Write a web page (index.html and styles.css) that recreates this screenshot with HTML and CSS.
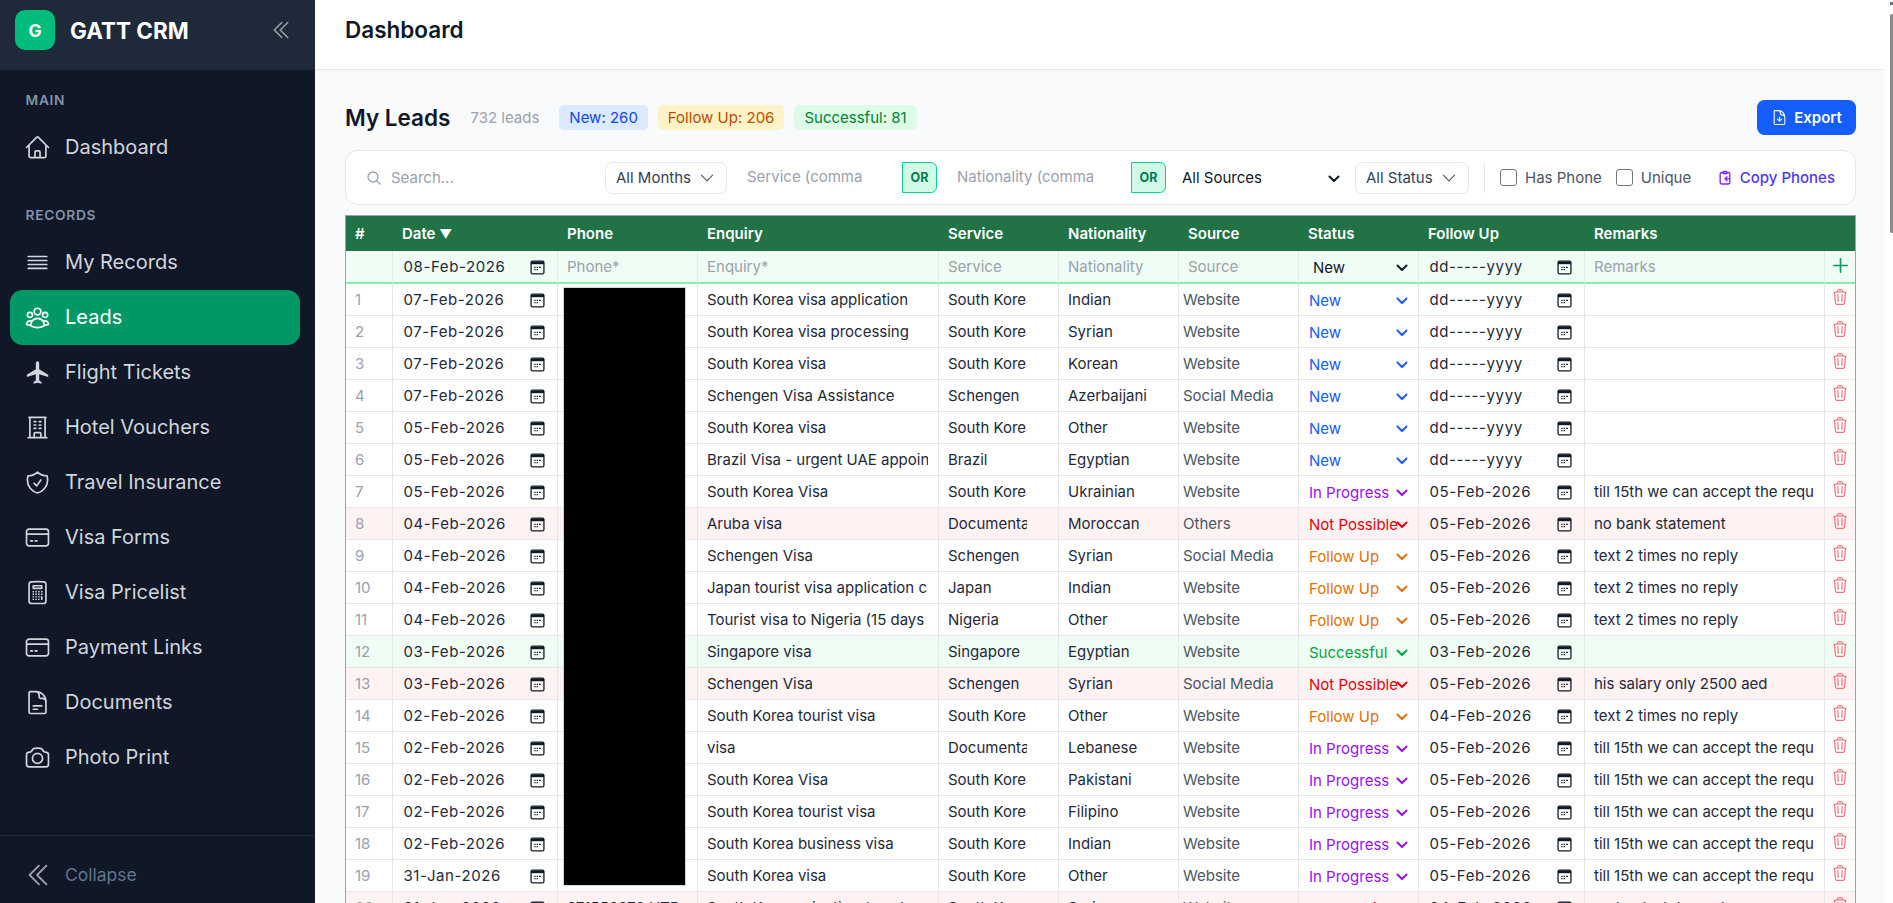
FILE: index.html
```html
<!DOCTYPE html>
<html lang="en">
<head>
<meta charset="utf-8">
<title>GATT CRM</title>
<link rel="stylesheet" href="styles.css">
</head>
<body>
<svg class="defs" aria-hidden="true">
  <symbol id="cal" viewBox="0 0 14 14"><rect x="1" y="1" width="12" height="12" rx="1.4" fill="none" stroke="currentColor" stroke-width="1.2"/><rect x="1" y="1.5" width="12" height="2.4" fill="currentColor"/><path d="M4 6.2h1.200v1.200H4zM6.200 6.200h1.200v1.200H6.200zM8.400 6.200h1.600v1.200H8.400zM4 8.400h1.200v1.200H4zM6.200 8.400h1.200v1.200H6.200z" fill="currentColor"/></symbol>
  <symbol id="trash" viewBox="0 0 24 24"><path fill="none" stroke="currentColor" stroke-width="1.5" stroke-linecap="round" stroke-linejoin="round" d="m14.74 9-.346 9m-4.788 0L9.26 9m9.968-3.21c.342.052.682.107 1.022.166m-1.022-.165L18.16 19.673a2.25 2.25 0 0 1-2.244 2.077H8.084a2.25 2.25 0 0 1-2.244-2.077L4.772 5.79m14.456 0a48.108 48.108 0 0 0-3.478-.397m-12 .562c.34-.059.68-.114 1.022-.165m0 0a48.11 48.11 0 0 1 3.478-.397m7.5 0v-.916c0-1.18-.91-2.164-2.09-2.201a51.964 51.964 0 0 0-3.32 0c-1.18.037-2.09 1.022-2.09 2.201v.916m7.5 0a48.667 48.667 0 0 0-7.5 0"/></symbol>
  <symbol id="down" viewBox="0 0 24 24"><path fill="none" stroke="currentColor" stroke-width="1.5" stroke-linecap="round" stroke-linejoin="round" d="m19.5 8.25-7.5 7.5-7.5-7.5"/></symbol>
  <symbol id="chev" viewBox="0 0 12 8"><path fill="none" stroke="currentColor" stroke-width="2" stroke-linecap="round" stroke-linejoin="round" d="M1.500 1.500 6 6l4.500-4.500"/></symbol>
  <symbol id="dbl" viewBox="0 0 24 24"><path fill="none" stroke="currentColor" stroke-width="1.5" stroke-linecap="round" stroke-linejoin="round" d="m18.75 4.5-7.5 7.5 7.5 7.5m-6-15L5.25 12l7.5 7.5"/></symbol>
  <symbol id="card" viewBox="0 0 24 24"><path fill="none" stroke="currentColor" stroke-width="1.5" stroke-linecap="round" stroke-linejoin="round" d="M2.25 9h19.5M4.5 19.5h15a2.25 2.25 0 0 0 2.25-2.25V6.75A2.25 2.25 0 0 0 19.5 4.5h-15a2.25 2.25 0 0 0-2.25 2.25v10.5A2.25 2.25 0 0 0 4.5 19.5ZM6 15h1.500M10 15h1.500"/></symbol>
</svg>
<div class="app">
  <aside class="sidebar">
    <div class="brand">
      <span class="logo">G</span>
      <span class="brand-name">GATT CRM</span>
      <svg class="brand-toggle"><use href="#dbl"/></svg>
    </div>
    <nav class="nav">
      <div class="nav-label">MAIN</div>
      <a class="nav-item"><svg class="nav-icon" viewBox="0 0 24 24"><path d="m2.25 12 8.954-8.955c.44-.439 1.152-.439 1.591 0L21.75 12M4.5 9.75v10.125c0 .621.504 1.125 1.125 1.125H9.75v-4.875c0-.621.504-1.125 1.125-1.125h2.25c.621 0 1.125.504 1.125 1.125V21h4.125c.621 0 1.125-.504 1.125-1.125V9.75M8.25 21h8.25"/></svg>Dashboard</a>
      <div class="nav-label nav-label-next">RECORDS</div>
      <a class="nav-item"><svg class="nav-icon" viewBox="0 0 24 24"><path d="M3.750 6.670h16.500M3.750 10.200h16.500M3.750 13.800h16.500M3.750 17.300h16.500"/></svg>My Records</a>
      <a class="nav-item active"><svg class="nav-icon" viewBox="0 0 24 24"><path d="M18 18.72a9.094 9.094 0 0 0 3.741-.479 3 3 0 0 0-4.682-2.72m.94 3.198.001.031c0 .225-.012.447-.037.666A11.944 11.944 0 0 1 12 21c-2.17 0-4.207-.576-5.963-1.584A6.062 6.062 0 0 1 6 18.719m12 0a5.971 5.971 0 0 0-.941-3.197m0 0A5.995 5.995 0 0 0 12 12.75a5.995 5.995 0 0 0-5.058 2.772m0 0a3 3 0 0 0-4.681 2.72 8.986 8.986 0 0 0 3.74.477m.94-3.197a5.971 5.971 0 0 0-.94 3.197M15 6.75a3 3 0 1 1-6 0 3 3 0 0 1 6 0Zm6 3a2.25 2.25 0 1 1-4.5 0 2.25 2.25 0 0 1 4.5 0Zm-13.5 0a2.25 2.25 0 1 1-4.5 0 2.25 2.25 0 0 1 4.5 0Z"/></svg>Leads</a>
      <a class="nav-item"><svg class="nav-icon nav-solid" viewBox="0 0 24 24"><path d="M21.500 16v-2l-8-5V3.500a1.500 1.500 0 0 0-3 0V9l-8 5v2l8-2.500V19l-2 1.500V22l3.500-1 3.500 1v-1.500L13.500 19v-5.500l8 2.500z"/></svg>Flight Tickets</a>
      <a class="nav-item"><svg class="nav-icon" viewBox="0 0 24 24"><path d="M3.750 21h16.500M4.500 3h15M5.250 3v18m13.500-18v18M9 6.750h1.500m-1.500 3h1.500m-1.500 3h1.500m3-6H15m-1.500 3H15m-1.500 3H15M9 21v-3.375c0-.621.504-1.125 1.125-1.125h3.750c.621 0 1.125.504 1.125 1.125V21"/></svg>Hotel Vouchers</a>
      <a class="nav-item"><svg class="nav-icon" viewBox="0 0 24 24"><path d="M9 12.750 11.250 15 15 9.750m-3-7.036A11.959 11.959 0 0 1 3.598 6 11.990 11.990 0 0 0 3 9.749c0 5.592 3.824 10.290 9 11.623 5.176-1.332 9-6.030 9-11.622 0-1.310-.210-2.571-.598-3.751h-.152c-3.196 0-6.100-1.248-8.250-3.285Z"/></svg>Travel Insurance</a>
      <a class="nav-item"><svg class="nav-icon"><use href="#card"/></svg>Visa Forms</a>
      <a class="nav-item"><svg class="nav-icon" viewBox="0 0 24 24"><path d="M15.750 15.750V18m-7.500-6.750h.008v.008H8.250v-.008Zm0 2.250h.008v.008H8.250V13.500Zm0 2.250h.008v.008H8.250v-.008Zm0 2.250h.008v.008H8.250V18Zm2.498-6.750h.007v.008h-.007v-.008Zm0 2.250h.007v.008h-.007V13.500Zm0 2.250h.007v.008h-.007v-.008Zm0 2.250h.007v.008h-.007V18Zm2.504-6.750h.008v.008h-.008v-.008Zm0 2.250h.008v.008h-.008V13.500Zm0 2.250h.008v.008h-.008v-.008Zm0 2.250h.008v.008h-.008V18Zm2.498-6.750h.008v.008h-.008v-.008Zm0 2.250h.008v.008h-.008V13.500ZM8.250 6h7.500v2.250h-7.500V6ZM12 2.250c-1.892 0-3.758.110-5.593.322C5.307 2.700 4.500 3.650 4.500 4.757V19.500a2.250 2.250 0 0 0 2.250 2.250h10.500a2.250 2.250 0 0 0 2.250-2.250V4.757c0-1.108-.806-2.057-1.907-2.185A48.507 48.507 0 0 0 12 2.250Z"/></svg>Visa Pricelist</a>
      <a class="nav-item"><svg class="nav-icon"><use href="#card"/></svg>Payment Links</a>
      <a class="nav-item"><svg class="nav-icon" viewBox="0 0 24 24"><path d="M19.500 14.250v-2.625a3.375 3.375 0 0 0-3.375-3.375h-1.500A1.125 1.125 0 0 1 13.500 7.125v-1.500a3.375 3.375 0 0 0-3.375-3.375H8.250m0 12.750h7.500m-7.500 3H12M10.500 2.250H5.625c-.621 0-1.125.504-1.125 1.125v17.250c0 .621.504 1.125 1.125 1.125h12.750c.621 0 1.125-.504 1.125-1.125V11.250a9 9 0 0 0-9-9Z"/></svg>Documents</a>
      <a class="nav-item"><svg class="nav-icon" viewBox="0 0 24 24"><path d="M6.827 6.175A2.310 2.310 0 0 1 5.186 7.230c-.380.054-.757.112-1.134.175C2.999 7.580 2.250 8.507 2.250 9.574V18a2.250 2.250 0 0 0 2.250 2.250h15A2.250 2.250 0 0 0 21.750 18V9.574c0-1.067-.750-1.994-1.802-2.169a47.865 47.865 0 0 0-1.134-.175 2.310 2.310 0 0 1-1.640-1.055l-.822-1.316a2.192 2.192 0 0 0-1.736-1.039 48.774 48.774 0 0 0-5.232 0 2.192 2.192 0 0 0-1.736 1.039l-.821 1.316Z"/><path d="M16.500 12.750a4.500 4.500 0 1 1-9 0 4.500 4.500 0 0 1 9 0Z"/></svg>Photo Print</a>
    </nav>
    <div class="collapse"><svg class="collapse-icon"><use href="#dbl"/></svg>Collapse</div>
  </aside>
  <main class="main">
    <header class="topbar"><h1>Dashboard</h1></header>
    <div class="content">
      <div class="title-row">
        <h2>My Leads</h2>
        <span class="count">732 leads</span>
        <span class="pill pill-new">New: 260</span>
        <span class="pill pill-follow">Follow Up: 206</span>
        <span class="pill pill-ok">Successful: 81</span>
        <button class="export"><svg class="export-icon" viewBox="0 0 24 24"><path d="M19.500 14.250v-2.625a3.375 3.375 0 0 0-3.375-3.375h-1.500A1.125 1.125 0 0 1 13.500 7.125v-1.500a3.375 3.375 0 0 0-3.375-3.375H8.250m.750 12 3 3m0 0 3-3m-3 3v-6m-1.500-9H5.625c-.621 0-1.125.504-1.125 1.125v17.250c0 .621.504 1.125 1.125 1.125h12.750c.621 0 1.125-.504 1.125-1.125V11.250a9 9 0 0 0-9-9Z"/></svg>Export</button>
      </div>
      <div class="filters">
        <div class="search"><svg class="search-icon" viewBox="0 0 24 24"><path d="m21 21-5.197-5.197m0 0A7.500 7.500 0 1 0 5.196 5.196a7.500 7.500 0 0 0 10.607 10.607Z"/></svg>Search...</div>
        <div class="drop drop-months">All Months<svg class="drop-icon"><use href="#down"/></svg></div>
        <div class="multi multi-service"><span class="multi-text">Service (comma separated)</span><span class="or">OR</span></div>
        <div class="multi multi-nat"><span class="multi-text">Nationality (comma separated)</span><span class="or">OR</span></div>
        <div class="source"><select class="source-select"><option>All Sources</option></select><svg class="source-chev"><use href="#chev"/></svg></div>
        <div class="drop drop-status">All Status<svg class="drop-icon"><use href="#down"/></svg></div>
        <span class="divider"></span>
        <label class="check check-phone"><input type="checkbox">Has Phone</label>
        <label class="check check-unique"><input type="checkbox">Unique</label>
        <span class="copy"><svg class="copy-icon" viewBox="0 0 24 24"><path d="M9 4.500H7a2.250 2.250 0 0 0-2.250 2.250v12.750A2.250 2.250 0 0 0 7 21.750h10a2.250 2.250 0 0 0 2.250-2.250V6.750A2.250 2.250 0 0 0 17 4.500h-2M9 4.500a1.500 1.500 0 0 1 1.500-1.500h3a1.500 1.500 0 0 1 1.500 1.500V6H9V4.500ZM19 14h-7m0 0 3-3m-3 3 3 3"/></svg>Copy Phones</span>
      </div>
      <div class="table-wrap">
        <table class="leads">
          <colgroup><col class="c-num"><col class="c-date"><col class="c-phone"><col class="c-enq"><col class="c-svc"><col class="c-nat"><col class="c-src"><col class="c-status"><col class="c-follow"><col class="c-rem"><col class="c-act"></colgroup>
          <thead><tr><th>#</th><th>Date <span class="sort">▼</span></th><th>Phone</th><th>Enquiry</th><th>Service</th><th>Nationality</th><th>Source</th><th>Status</th><th>Follow Up</th><th>Remarks</th><th></th></tr></thead>
          <tbody>
            <tr class="add-row"><td></td><td class="date">08-Feb-2026<svg class="cal"><use href="#cal"/></svg></td><td class="ph">Phone*</td><td class="ph">Enquiry*</td><td class="ph">Service</td><td class="ph">Nationality</td><td class="ph">Source</td><td class="st s-add"><select class="status"><option>New</option></select><svg class="chev"><use href="#chev"/></svg></td><td class="date">dd-----yyyy<svg class="cal"><use href="#cal"/></svg></td><td class="ph">Remarks</td><td class="act"><svg class="plus" viewBox="0 0 24 24"><path d="M12 3.500v17M3.500 12h17"/></svg></td></tr>
            <tr><td class="num">1</td><td class="date">07-Feb-2026<svg class="cal"><use href="#cal"/></svg></td><td></td><td><span class="clip enq">South Korea visa application</span></td><td><span class="clip svc">South Korea</span></td><td>Indian</td><td class="src">Website</td><td class="st s-new"><select class="status"><option>New</option></select><svg class="chev"><use href="#chev"/></svg></td><td class="date">dd-----yyyy<svg class="cal"><use href="#cal"/></svg></td><td><span class="clip rem"></span></td><td class="act"><svg class="del"><use href="#trash"/></svg></td></tr>
            <tr><td class="num">2</td><td class="date">07-Feb-2026<svg class="cal"><use href="#cal"/></svg></td><td></td><td><span class="clip enq">South Korea visa processing</span></td><td><span class="clip svc">South Korea</span></td><td>Syrian</td><td class="src">Website</td><td class="st s-new"><select class="status"><option>New</option></select><svg class="chev"><use href="#chev"/></svg></td><td class="date">dd-----yyyy<svg class="cal"><use href="#cal"/></svg></td><td><span class="clip rem"></span></td><td class="act"><svg class="del"><use href="#trash"/></svg></td></tr>
            <tr><td class="num">3</td><td class="date">07-Feb-2026<svg class="cal"><use href="#cal"/></svg></td><td></td><td><span class="clip enq">South Korea visa</span></td><td><span class="clip svc">South Korea</span></td><td>Korean</td><td class="src">Website</td><td class="st s-new"><select class="status"><option>New</option></select><svg class="chev"><use href="#chev"/></svg></td><td class="date">dd-----yyyy<svg class="cal"><use href="#cal"/></svg></td><td><span class="clip rem"></span></td><td class="act"><svg class="del"><use href="#trash"/></svg></td></tr>
            <tr><td class="num">4</td><td class="date">07-Feb-2026<svg class="cal"><use href="#cal"/></svg></td><td></td><td><span class="clip enq">Schengen Visa Assistance</span></td><td><span class="clip svc">Schengen</span></td><td>Azerbaijani</td><td class="src">Social Media</td><td class="st s-new"><select class="status"><option>New</option></select><svg class="chev"><use href="#chev"/></svg></td><td class="date">dd-----yyyy<svg class="cal"><use href="#cal"/></svg></td><td><span class="clip rem"></span></td><td class="act"><svg class="del"><use href="#trash"/></svg></td></tr>
            <tr><td class="num">5</td><td class="date">05-Feb-2026<svg class="cal"><use href="#cal"/></svg></td><td></td><td><span class="clip enq">South Korea visa</span></td><td><span class="clip svc">South Korea</span></td><td>Other</td><td class="src">Website</td><td class="st s-new"><select class="status"><option>New</option></select><svg class="chev"><use href="#chev"/></svg></td><td class="date">dd-----yyyy<svg class="cal"><use href="#cal"/></svg></td><td><span class="clip rem"></span></td><td class="act"><svg class="del"><use href="#trash"/></svg></td></tr>
            <tr><td class="num">6</td><td class="date">05-Feb-2026<svg class="cal"><use href="#cal"/></svg></td><td></td><td><span class="clip enq">Brazil Visa - urgent UAE appointment</span></td><td><span class="clip svc">Brazil</span></td><td>Egyptian</td><td class="src">Website</td><td class="st s-new"><select class="status"><option>New</option></select><svg class="chev"><use href="#chev"/></svg></td><td class="date">dd-----yyyy<svg class="cal"><use href="#cal"/></svg></td><td><span class="clip rem"></span></td><td class="act"><svg class="del"><use href="#trash"/></svg></td></tr>
            <tr><td class="num">7</td><td class="date">05-Feb-2026<svg class="cal"><use href="#cal"/></svg></td><td></td><td><span class="clip enq">South Korea Visa</span></td><td><span class="clip svc">South Korea</span></td><td>Ukrainian</td><td class="src">Website</td><td class="st s-prog"><select class="status"><option>In Progress</option></select><svg class="chev"><use href="#chev"/></svg></td><td class="date">05-Feb-2026<svg class="cal"><use href="#cal"/></svg></td><td><span class="clip rem">till 15th we can accept the request</span></td><td class="act"><svg class="del"><use href="#trash"/></svg></td></tr>
            <tr class="row-bad"><td class="num">8</td><td class="date">04-Feb-2026<svg class="cal"><use href="#cal"/></svg></td><td></td><td><span class="clip enq">Aruba visa</span></td><td><span class="clip svc">Documentation</span></td><td>Moroccan</td><td class="src">Others</td><td class="st s-bad"><select class="status"><option>Not Possible</option></select><svg class="chev"><use href="#chev"/></svg></td><td class="date">05-Feb-2026<svg class="cal"><use href="#cal"/></svg></td><td><span class="clip rem">no bank statement</span></td><td class="act"><svg class="del"><use href="#trash"/></svg></td></tr>
            <tr><td class="num">9</td><td class="date">04-Feb-2026<svg class="cal"><use href="#cal"/></svg></td><td></td><td><span class="clip enq">Schengen Visa</span></td><td><span class="clip svc">Schengen</span></td><td>Syrian</td><td class="src">Social Media</td><td class="st s-follow"><select class="status"><option>Follow Up</option></select><svg class="chev"><use href="#chev"/></svg></td><td class="date">05-Feb-2026<svg class="cal"><use href="#cal"/></svg></td><td><span class="clip rem">text 2 times no reply</span></td><td class="act"><svg class="del"><use href="#trash"/></svg></td></tr>
            <tr><td class="num">10</td><td class="date">04-Feb-2026<svg class="cal"><use href="#cal"/></svg></td><td></td><td><span class="clip enq">Japan tourist visa application check</span></td><td><span class="clip svc">Japan</span></td><td>Indian</td><td class="src">Website</td><td class="st s-follow"><select class="status"><option>Follow Up</option></select><svg class="chev"><use href="#chev"/></svg></td><td class="date">05-Feb-2026<svg class="cal"><use href="#cal"/></svg></td><td><span class="clip rem">text 2 times no reply</span></td><td class="act"><svg class="del"><use href="#trash"/></svg></td></tr>
            <tr><td class="num">11</td><td class="date">04-Feb-2026<svg class="cal"><use href="#cal"/></svg></td><td></td><td><span class="clip enq">Tourist visa to Nigeria (15 days stay</span></td><td><span class="clip svc">Nigeria</span></td><td>Other</td><td class="src">Website</td><td class="st s-follow"><select class="status"><option>Follow Up</option></select><svg class="chev"><use href="#chev"/></svg></td><td class="date">05-Feb-2026<svg class="cal"><use href="#cal"/></svg></td><td><span class="clip rem">text 2 times no reply</span></td><td class="act"><svg class="del"><use href="#trash"/></svg></td></tr>
            <tr class="row-ok"><td class="num">12</td><td class="date">03-Feb-2026<svg class="cal"><use href="#cal"/></svg></td><td></td><td><span class="clip enq">Singapore visa</span></td><td><span class="clip svc">Singapore</span></td><td>Egyptian</td><td class="src">Website</td><td class="st s-ok"><select class="status"><option>Successful</option></select><svg class="chev"><use href="#chev"/></svg></td><td class="date">03-Feb-2026<svg class="cal"><use href="#cal"/></svg></td><td><span class="clip rem"></span></td><td class="act"><svg class="del"><use href="#trash"/></svg></td></tr>
            <tr class="row-bad"><td class="num">13</td><td class="date">03-Feb-2026<svg class="cal"><use href="#cal"/></svg></td><td></td><td><span class="clip enq">Schengen Visa</span></td><td><span class="clip svc">Schengen</span></td><td>Syrian</td><td class="src">Social Media</td><td class="st s-bad"><select class="status"><option>Not Possible</option></select><svg class="chev"><use href="#chev"/></svg></td><td class="date">05-Feb-2026<svg class="cal"><use href="#cal"/></svg></td><td><span class="clip rem">his salary only 2500 aed</span></td><td class="act"><svg class="del"><use href="#trash"/></svg></td></tr>
            <tr><td class="num">14</td><td class="date">02-Feb-2026<svg class="cal"><use href="#cal"/></svg></td><td></td><td><span class="clip enq">South Korea tourist visa</span></td><td><span class="clip svc">South Korea</span></td><td>Other</td><td class="src">Website</td><td class="st s-follow"><select class="status"><option>Follow Up</option></select><svg class="chev"><use href="#chev"/></svg></td><td class="date">04-Feb-2026<svg class="cal"><use href="#cal"/></svg></td><td><span class="clip rem">text 2 times no reply</span></td><td class="act"><svg class="del"><use href="#trash"/></svg></td></tr>
            <tr><td class="num">15</td><td class="date">02-Feb-2026<svg class="cal"><use href="#cal"/></svg></td><td></td><td><span class="clip enq">visa</span></td><td><span class="clip svc">Documentation</span></td><td>Lebanese</td><td class="src">Website</td><td class="st s-prog"><select class="status"><option>In Progress</option></select><svg class="chev"><use href="#chev"/></svg></td><td class="date">05-Feb-2026<svg class="cal"><use href="#cal"/></svg></td><td><span class="clip rem">till 15th we can accept the request</span></td><td class="act"><svg class="del"><use href="#trash"/></svg></td></tr>
            <tr><td class="num">16</td><td class="date">02-Feb-2026<svg class="cal"><use href="#cal"/></svg></td><td></td><td><span class="clip enq">South Korea Visa</span></td><td><span class="clip svc">South Korea</span></td><td>Pakistani</td><td class="src">Website</td><td class="st s-prog"><select class="status"><option>In Progress</option></select><svg class="chev"><use href="#chev"/></svg></td><td class="date">05-Feb-2026<svg class="cal"><use href="#cal"/></svg></td><td><span class="clip rem">till 15th we can accept the request</span></td><td class="act"><svg class="del"><use href="#trash"/></svg></td></tr>
            <tr><td class="num">17</td><td class="date">02-Feb-2026<svg class="cal"><use href="#cal"/></svg></td><td></td><td><span class="clip enq">South Korea tourist visa</span></td><td><span class="clip svc">South Korea</span></td><td>Filipino</td><td class="src">Website</td><td class="st s-prog"><select class="status"><option>In Progress</option></select><svg class="chev"><use href="#chev"/></svg></td><td class="date">05-Feb-2026<svg class="cal"><use href="#cal"/></svg></td><td><span class="clip rem">till 15th we can accept the request</span></td><td class="act"><svg class="del"><use href="#trash"/></svg></td></tr>
            <tr><td class="num">18</td><td class="date">02-Feb-2026<svg class="cal"><use href="#cal"/></svg></td><td></td><td><span class="clip enq">South Korea business visa</span></td><td><span class="clip svc">South Korea</span></td><td>Indian</td><td class="src">Website</td><td class="st s-prog"><select class="status"><option>In Progress</option></select><svg class="chev"><use href="#chev"/></svg></td><td class="date">05-Feb-2026<svg class="cal"><use href="#cal"/></svg></td><td><span class="clip rem">till 15th we can accept the request</span></td><td class="act"><svg class="del"><use href="#trash"/></svg></td></tr>
            <tr><td class="num">19</td><td class="date">31-Jan-2026<svg class="cal"><use href="#cal"/></svg></td><td></td><td><span class="clip enq">South Korea visa</span></td><td><span class="clip svc">South Korea</span></td><td>Other</td><td class="src">Website</td><td class="st s-prog"><select class="status"><option>In Progress</option></select><svg class="chev"><use href="#chev"/></svg></td><td class="date">05-Feb-2026<svg class="cal"><use href="#cal"/></svg></td><td><span class="clip rem">till 15th we can accept the request</span></td><td class="act"><svg class="del"><use href="#trash"/></svg></td></tr>
            <tr class="row-bad"><td class="num">20</td><td class="date">31-Jan-2026<svg class="cal"><use href="#cal"/></svg></td><td>971556970 UTD</td><td><span class="clip enq">South Korea rejection / work</span></td><td><span class="clip svc">South Korea</span></td><td>Syrian</td><td class="src">Website</td><td class="st s-bad"><select class="status"><option>Not Possible</option></select><svg class="chev"><use href="#chev"/></svg></td><td class="date">04-Feb-2026<svg class="cal"><use href="#cal"/></svg></td><td><span class="clip rem">no bank statement</span></td><td class="act"><svg class="del"><use href="#trash"/></svg></td></tr>
          </tbody>
        </table>
        <div class="redact"></div>
      </div>
    </div>
  </main>
  <div class="scrollbar"><span class="scroll-arrow"></span><span class="scroll-thumb"></span></div>
</div>
</body>
</html>
```
FILE: styles.css
```css
* { box-sizing: border-box; }
html, body { margin: 0; height: 100%; overflow: hidden; }
body { font-family: "Inter", "Liberation Sans", sans-serif; color: #101828; background: #fff; }
.defs { position: absolute; width: 0; height: 0; }
.app { display: flex; height: 903px; }

.sidebar { width: 315px; flex: none; background: #101828; display: flex; flex-direction: column; }
.brand { height: 70px; flex: none; background: #1e2939; display: flex; align-items: center; padding: 0 0 10px 15px; }
.logo { width: 40px; height: 40px; border-radius: 10px; background: #00bc7d; color: #fff; font-weight: 700; font-size: 17.5px; display: flex; align-items: center; justify-content: center; }
.brand-name { margin-left: 15px; color: #fff; font-size: 22.5px; font-weight: 700; }
.brand-toggle { width: 24px; height: 24px; color: #99a1af; margin-left: 80px; }
.nav { padding: 20px 15px 0 10px; flex: 1; }
.nav-label { height: 20px; line-height: 20px; margin: 0 0 10px 15.5px; font-size: 13.75px; font-weight: 600; letter-spacing: 0.7px; color: #8291a8; }
.nav-label-next { margin-top: 30px; }
.nav-item { height: 55px; display: flex; align-items: center; padding: 0 0 1px 14px; gap: 14px; color: #d1d5dc; font-size: 20px; border-radius: 12.5px; }
.nav-item.active { background: #009966; color: #fff; }
.nav-icon { width: 27px; height: 27px; flex: none; fill: none; stroke: currentColor; stroke-width: 1.5; stroke-linecap: round; stroke-linejoin: round; }
.nav-solid { fill: currentColor; stroke: none; }
.collapse { height: 68px; flex: none; border-top: 1px solid #1e2939; display: flex; align-items: center; padding: 10px 0 0 23px; gap: 12px; color: #62748e; font-size: 17.5px; }
.collapse-icon { width: 30px; height: 30px; color: #99a1af; }

.main { flex: 1; min-width: 0; display: flex; flex-direction: column; background: #f9fafb; }
.topbar { height: 70px; flex: none; background: #fff; border-bottom: 1px solid #e5e7eb; padding: 0 0 10px 30px; display: flex; align-items: center; }
.topbar h1 { margin: 0; font-size: 22.500px; font-weight: 600; color: #101828; }
.content { flex: 1; min-height: 0; overflow: hidden; padding: 30px 29px 0 30px; }

.title-row { height: 35px; display: flex; align-items: center; }
.title-row h2 { margin: 0; font-size: 22.500px; font-weight: 600; color: #101828; }
.count { margin-left: 20px; color: #99a1af; font-size: 15px; }
.pill { height: 25px; margin-left: 10px; padding: 0 10px; border-radius: 5px; display: flex; align-items: center; font-size: 15px; font-weight: 400; }
.count + .pill { margin-left: 20px; }
.pill-new { background: #dbeafe; color: #1447e6; }
.pill-follow { background: #fef3c6; color: #bb4d00; }
.pill-ok { background: #dcfce7; color: #008236; }
.export { margin-left: auto; width: 99px; height: 35px; border: 0; border-radius: 7.500px; background: #155dfc; color: #fff; font: 600 15px "Inter", sans-serif; display: flex; align-items: center; justify-content: center; gap: 6px; }
.export-icon { width: 17px; height: 17px; fill: none; stroke: currentColor; stroke-width: 1.5; stroke-linecap: round; stroke-linejoin: round; }

.filters { margin-top: 15px; height: 55px; background: #fff; border: 1px solid #e5e7eb; border-radius: 12.500px; display: flex; align-items: center; padding-left: 20px; font-size: 15px; color: #364153; }
.search { width: 239px; display: flex; align-items: center; color: #99a1af; font-size: 15px; gap: 9px; }
.search-icon { width: 16px; height: 16px; fill: none; stroke: #99a1af; stroke-width: 2; stroke-linecap: round; }
.drop { height: 32px; border: 1px solid #e5e7eb; border-radius: 7.500px; display: flex; align-items: center; justify-content: space-between; padding: 0 10px; color: #364153; flex: none; }
.drop-months { width: 122px; }
.drop-status { width: 114px; margin-left: 6px; }
.drop-icon { width: 18px; height: 18px; color: #4a5565; }
.multi { display: flex; align-items: center; justify-content: space-between; height: 31px; flex: none; }
.multi-service { margin-left: 20px; width: 190px; }
.multi-nat { margin-left: 20px; width: 209px; }
.multi-text { overflow: hidden; white-space: nowrap; color: #99a1af; font-size: 15px; margin-bottom: 2px; }
.multi-service .multi-text { width: 115px; }
.multi-nat .multi-text { width: 136px; }
.or { width: 35px; height: 31px; flex: none; display: flex; align-items: center; justify-content: center; background: #d0fae5; border: 1px solid #00d492; border-radius: 0 6px 6px 0; color: #007a55; font-size: 12.500px; font-weight: 700; }
.source { position: relative; width: 177px; margin-left: 6px; flex: none; }
.source-select { appearance: none; display: block; width: 100%; height: 32px; border: 0; background: transparent; font: 15px "Inter", sans-serif; color: #101828; padding-left: 10px; }
.source-chev { position: absolute; right: 9px; top: 13px; width: 12px; height: 8px; color: #101828; pointer-events: none; }
.divider { width: 1px; height: 30px; background: #e5e7eb; margin-left: 15px; }
.check { display: flex; align-items: center; color: #4a5565; gap: 8px; font-size: 15px; }
.check input { appearance: none; width: 17px; height: 17px; margin: 0; border: 1px solid #767676; border-radius: 3px; background: #fff; }
.check-phone { margin-left: 15px; }
.check-unique { margin-left: 14px; }
.copy { margin-left: auto; margin-right: 20px; display: flex; align-items: center; gap: 7px; color: #4f39f6; font-size: 15px; font-weight: 500; }
.copy-icon { width: 16px; height: 17px; fill: none; stroke: #7f22fe; stroke-width: 2; stroke-linecap: round; stroke-linejoin: round; }

.table-wrap { position: relative; margin-top: 10px; border: 1px solid #9ca3af; border-bottom: 0; background: #fff; }
.leads { width: 100%; table-layout: fixed; border-collapse: separate; border-spacing: 0; font-size: 15px; color: #1e2939; }
.c-num { width: 47px; } .c-date { width: 165px; } .c-phone { width: 140px; } .c-enq { width: 241px; }
.c-svc, .c-nat, .c-src, .c-status { width: 120px; } .c-follow { width: 166px; } .c-rem { width: 240px; }
.leads th { height: 35px; background: #217346; color: #fff; font-size: 15px; font-weight: 600; text-align: left; padding: 0 0 0 9px; }
.sort { font-size: 12.5px; }
.leads td { height: 32px; padding: 0 0 0 9px; border-bottom: 1px solid #e5e7eb; border-right: 1px solid #e5e7eb; white-space: nowrap; overflow: hidden; position: relative; }
.leads td:last-child { border-right: 0; }
.add-row td { height: 33px; background: #f0fdf4; border-bottom: 2px solid #86efac; }
.row-bad td { background: #fef2f2; }
.row-ok td { background: #f0fdf4; }
.num { color: #99a1af; }
.ph { color: #99a1af; }
.leads td.src { color: #4a5565; padding-left: 4px; }
.leads td.date { padding-left: 10.5px; letter-spacing: 0.6px; }
.cal { position: absolute; right: 12px; top: 50%; margin-top: -7px; width: 15px; height: 15px; color: #101828; }
.clip { display: block; overflow: hidden; }
.enq { width: 221px; }
.svc { width: 79px; }
.rem { width: 220px; }
.leads td.st { padding: 0 0 0 10px; }
.status { appearance: none; width: 103px; height: 28px; border: 0; background: transparent; color: inherit; font: 15px "Inter", sans-serif; padding: 0; margin-top: 2px; display: block; }
.chev { position: absolute; right: 10px; top: 50%; margin-top: -3px; width: 12px; height: 8px; pointer-events: none; }
.s-add { color: #101828; }
.leads .s-add .status { padding-left: 4px; }
.s-new { color: #155dfc; }
.s-prog { color: #9810fa; }
.s-bad { color: #e7000b; }
.s-follow { color: #e17100; }
.s-ok { color: #00a63e; }
.leads td.act { padding: 0; text-align: center; }
.plus { display: block; width: 19px; height: 19px; margin: -2px auto 0; fill: none; stroke: #009966; stroke-width: 2; stroke-linecap: round; }
.del { display: block; width: 18px; height: 18px; margin: -5px auto 0; color: #fb6c72; }
.redact { position: absolute; left: 217px; top: 71px; width: 123px; height: 599px; background: #000; border: 1px solid #d1d5dc; }

.scrollbar { width: 8px; flex: none; background: #fff; display: flex; flex-direction: column; align-items: flex-end; }
.scroll-arrow { width: 3px; height: 3px; margin-top: 2px; background: #6b7280; }
.scroll-thumb { width: 3px; height: 219px; margin-top: 9px; background: #8a8a8a; border-radius: 2px 0 0 2px; }
```
